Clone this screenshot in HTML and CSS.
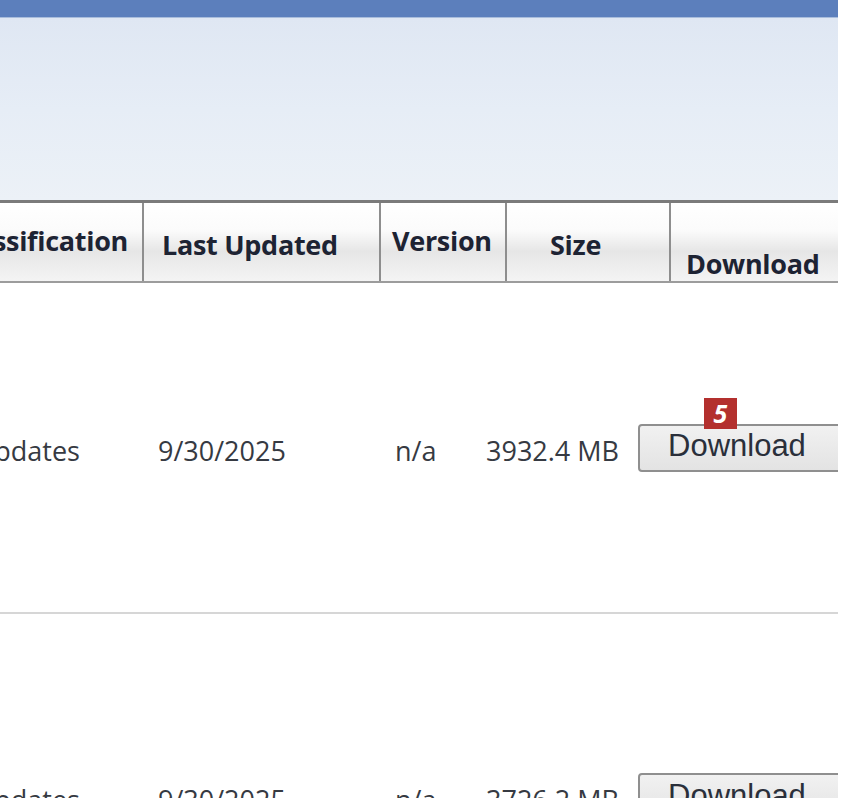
FILE: index.html
```html
<!DOCTYPE html>
<html lang="en">
<head>
  <meta charset="UTF-8" />
  <title>Downloads</title>
  <link rel="stylesheet" href="styles.css">
</head>
<body>
  <div class="page">
    <div class="topbar"></div>
    <div class="banner"></div>

    <div class="thead">
      <div class="th th-class"><span>Classification</span></div>
      <div class="th th-date">Last Updated</div>
      <div class="th th-ver">Version</div>
      <div class="th th-size">Size</div>
      <div class="th th-dl">Download</div>
    </div>

    <div class="row row-first">
      <div class="td td-class"><span>Updates</span></div>
      <div class="td td-date">9/30/2025</div>
      <div class="td td-ver">n/a</div>
      <div class="td td-size">3932.4 MB</div>
      <div class="td td-dl">
        <div class="btn-wrap">
          <span class="badge">5</span>
          <button type="button" class="btn">Download</button>
        </div>
      </div>
    </div>

    <div class="row row-second">
      <div class="td td-class"><span>Updates</span></div>
      <div class="td td-date">9/30/2025</div>
      <div class="td td-ver">n/a</div>
      <div class="td td-size">3726.2 MB</div>
      <div class="td td-dl">
        <div class="btn-wrap">
          <button type="button" class="btn">Download</button>
        </div>
      </div>
    </div>
  </div>
</body>
</html>
```

FILE: styles.css
```css
body { margin: 0; background: #fff; font-family: "Open Sans", "Noto Sans", sans-serif; }
.page { width: 838px; height: 798px; overflow: hidden; }

.topbar { height: 17px; background: #5c7fbc; border-bottom: 1px solid #a9bddc; }
.banner { height: 182px; background: linear-gradient(#dfe7f3, #e6edf6 50%, #ecf1f7); }

.thead {
  display: grid;
  grid-template-columns: 142px 237px 126px 164px 1fr;
  height: 78px;
  border-top: 3px solid #7b7b7b;
  border-bottom: 2px solid #9c9c9c;
  background: linear-gradient(#fff 0%, #fbfbfb 35%, #e6e6e6 62%, #f4f4f4 100%);
}
.th {
  font-size: 27px;
  font-weight: 700;
  color: #1d2333;
  white-space: nowrap;
  border-left: 2px solid #8e8e8e;
  overflow: hidden;
  letter-spacing: -0.3px;
}
.th-class { border-left: none; display: flex; justify-content: flex-end; padding: 19px 14px 0 0; }
.th-date { padding: 23px 0 0 18px; }
.th-ver { padding: 19px 0 0 11px; }
.th-size { padding: 23px 0 0 43px; }
.th-dl { padding: 42px 0 0 15px; }

.row {
  display: grid;
  grid-template-columns: 142px 237px 86px 173px 1fr;
  align-items: center;
  border-bottom: 2px solid #d6d6d6;
  font-size: 27px;
  color: #363a42;
}
.row-first { height: 331px; padding-top: 6px; box-sizing: border-box; }
.row-second { height: 370px; }

.td { white-space: nowrap; }
.td-class { display: flex; justify-content: flex-end; padding-right: 62px; overflow: hidden; }
.td-date { padding-left: 16px; }
.td-ver { padding-left: 16px; }
.td-size { padding-left: 21px; }
.td-dl { overflow: hidden; }
.row-first .td-dl { padding-bottom: 32px; }
.row-second .td-dl { padding-bottom: 4px; }

.btn-wrap { position: relative; padding-top: 26px; }
.btn {
  width: 214px;
  height: 48px;
  padding: 0 0 3px 0;
  text-align: left;
  text-indent: 28px;
  font-family: "Liberation Sans", Arial, sans-serif;
  font-size: 31px;
  color: #2a2f3a;
  background: linear-gradient(#f1f1f1, #e3e3e3);
  border: 2px solid #8f8f8f;
  border-radius: 4px;
}
.badge {
  position: absolute;
  left: 66px;
  top: 0;
  width: 33px;
  height: 31px;
  background: #b3302e;
  color: #fff;
  font-size: 25px;
  font-weight: 700;
  font-style: italic;
  line-height: 31px;
  text-align: center;
}
.row-second .btn-wrap { padding-top: 0; }
```
